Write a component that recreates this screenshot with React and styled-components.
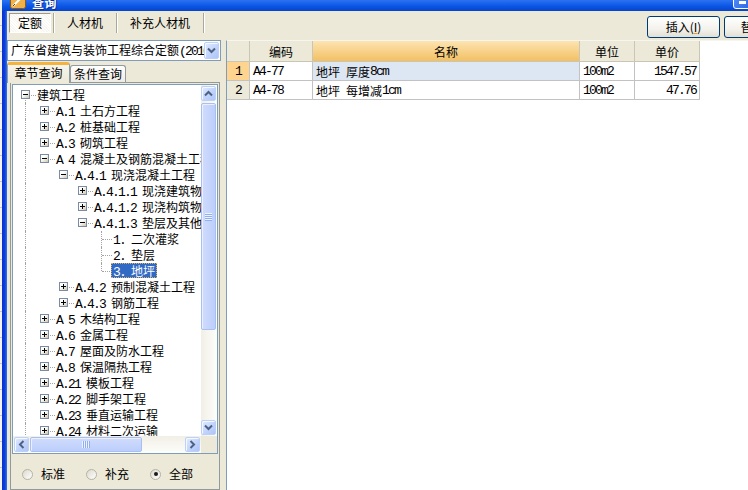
import React from 'react'
import styled, { createGlobalStyle } from 'styled-components'

// Global
const GlobalStyle = createGlobalStyle`
  html, body { margin: 0; padding: 0; background: #fff; }
  body {
    font-family: "Noto Sans CJK SC", "Noto Sans", sans-serif;
    font-size: 12px;
    color: #000;
  }
`

// Data
const treeItems = [
  { lv: 0, text: '建筑工程', open: true },
  { lv: 1, text: 'A.1 土石方工程' },
  { lv: 1, text: 'A.2 桩基础工程' },
  { lv: 1, text: 'A.3 砌筑工程' },
  { lv: 1, text: 'A 4 混凝土及钢筋混凝土工程', open: true },
  { lv: 2, text: 'A.4.1 现浇混凝土工程', open: true },
  { lv: 3, text: 'A.4.1.1 现浇建筑物混凝土' },
  { lv: 3, text: 'A.4.1.2 现浇构筑物混凝土' },
  { lv: 3, text: 'A.4.1.3 垫层及其他混凝土', open: true },
  { lv: 4, text: '1. 二次灌浆', leaf: true },
  { lv: 4, text: '2. 垫层', leaf: true },
  { lv: 4, text: '3. 地坪', leaf: true, selected: true },
  { lv: 2, text: 'A.4.2 预制混凝土工程' },
  { lv: 2, text: 'A.4.3 钢筋工程' },
  { lv: 1, text: 'A 5 木结构工程' },
  { lv: 1, text: 'A.6 金属工程' },
  { lv: 1, text: 'A.7 屋面及防水工程' },
  { lv: 1, text: 'A.8 保温隔热工程' },
  { lv: 1, text: 'A.21 模板工程' },
  { lv: 1, text: 'A.22 脚手架工程' },
  { lv: 1, text: 'A.23 垂直运输工程' },
  { lv: 1, text: 'A.24 材料二次运输' },
  { lv: 1, text: 'A.25 成品保护工程' },
  { lv: 0, text: '装饰装修工程' },
]

const rows = [
  { no: '1', code: 'A4-77', name: '地坪 厚度8cm', unit: '100m2', price: '1547.57', current: true },
  { no: '2', code: 'A4-78', name: '地坪 每增减1cm', unit: '100m2', price: '47.76' },
]

// Styled
const Latin = styled.span`
  font-family: "Liberation Mono", monospace;
  font-size: 13px;
  letter-spacing: -1.8px;
  white-space: pre;
`

const Screen = styled.div`
  width: 748px;
  height: 490px;
  overflow: hidden;
  display: flex;
`
const Backdrop = styled.div`
  width: 2px;
  flex: none;
  background: repeating-linear-gradient(to bottom, #f3f3f3 0 25px, #c8c8c8 25px 26px);
`
const Window = styled.div`
  width: 802px;
  flex: none;
  display: flex;
  flex-direction: column;
`
const TitleBar = styled.div`
  height: 11px;
  flex: none;
  overflow: hidden;
  display: flex;
  align-items: flex-end;
  padding: 0 4px 2px 8px;
  box-sizing: border-box;
  background: linear-gradient(#2b72f2, #0b56e6 55%, #0645c9);
`
const TitleText = styled.span`
  margin-left: 6px;
  color: #fff;
  font-weight: bold;
  font-size: 12px;
  line-height: 13px;
  letter-spacing: 0.5px;
  text-shadow: 1px 1px #0b2f9a;
`
const CaptionButtons = styled.div`
  margin-left: auto;
  display: flex;
  gap: 2px;
`
const CaptionButton = styled.div`
  width: 21px;
  height: 21px;
  box-sizing: border-box;
  border: 1px solid #fff;
  border-radius: 3px;
  background: ${p => (p.$close ? 'linear-gradient(135deg, #e88a6f, #c9431d)' : 'linear-gradient(135deg, #5c97f7, #2a64e2)')};
  position: relative;
  &::after {
    content: '';
    display: ${p => (p.$min ? 'block' : 'none')};
    position: absolute;
    left: 5px;
    bottom: 4px;
    width: 7px;
    height: 3px;
    background: #fff;
  }
`
const Frame = styled.div`
  flex: 1;
  display: flex;
  min-height: 0;
`
const FrameEdge = styled.div`
  width: ${p => p.$w}px;
  flex: none;
  background: linear-gradient(to right, #0a30cf, #0b3fdc 55%, #3672ee);
`
const Body = styled.div`
  flex: 1;
  display: flex;
  flex-direction: column;
  background: #ece9d8;
  min-width: 0;
`
const Toolbar = styled.div`
  height: 29px;
  flex: none;
  box-sizing: border-box;
  padding: 2px 4px 0 2px;
  display: flex;
  align-items: flex-start;
`
const ModeTabs = styled.div`
  display: flex;
  align-items: center;
  height: 20px;
`
const ModeTab = styled.div`
  height: 20px;
  box-sizing: border-box;
  padding: 0 ${p => (p.$active ? 8 : 10)}px;
  display: flex;
  align-items: center;
  line-height: 16px;
  border: 1px solid transparent;
  ${p => p.$active && `
    border-color: #9d9a8c #fff #fff #9d9a8c;
    background: repeating-linear-gradient(45deg, #f7f6f1 0 1px, #fff 1px 2px);
  `}
`
const ModeSep = styled.span`
  width: 1px;
  height: 20px;
  margin: 0 2px 0 2px;
  background: #aca899;
  box-shadow: 1px 0 #fff;
`
const ActionButtons = styled.div`
  margin-left: auto;
  margin-top: 3px;
  display: flex;
  gap: 4px;
`
const ActionButton = styled.div`
  width: 73px;
  height: 22px;
  box-sizing: border-box;
  border: 1px solid #003c74;
  border-radius: 3px;
  background: linear-gradient(#ffffff, #f3f2ec 60%, #e2dfd3);
  display: flex;
  align-items: center;
  justify-content: center;
  line-height: 16px;
  u { text-decoration-color: #e89a2a; }
`
const Main = styled.div`
  flex: 1;
  display: flex;
  min-height: 0;
`
const LeftPanel = styled.div`
  width: 214px;
  flex: none;
  display: flex;
  flex-direction: column;
`
const Combo = styled.div`
  height: 21px;
  flex: none;
  box-sizing: border-box;
  border: 1px solid #7f9db9;
  background: #fff;
  display: flex;
  align-items: center;
  padding: 1px;
`
const ComboText = styled.div`
  flex: 1;
  padding-left: 2px;
  overflow: hidden;
  white-space: nowrap;
  line-height: 17px;
`
const ScrollButton = styled.div`
  width: ${p => p.$w || 15}px;
  height: ${p => p.$h || 15}px;
  flex: none;
  box-sizing: border-box;
  border: 1px solid #bdd0f8;
  border-radius: 2px;
  background: linear-gradient(135deg, #e2ebfe, #c0d2fb 60%, #aec5f8);
  box-shadow: inset 1px 1px #f4f8ff;
  display: flex;
  align-items: center;
  justify-content: center;
  ${p => p.$end && (p.$across ? 'margin-left: auto;' : 'margin-top: auto;')}
`
const TabStrip = styled.div`
  height: 21px;
  flex: none;
  display: flex;
  align-items: flex-end;
  position: relative;
  z-index: 1;
`
const PageTab = styled.div`
  box-sizing: border-box;
  border: 1px solid #919b9c;
  border-bottom: none;
  border-radius: 3px 3px 0 0;
  display: flex;
  align-items: center;
  justify-content: center;
  line-height: 16px;
  ${p => (p.$active ? `
    width: 63px;
    height: 21px;
    margin-bottom: -1px;
    border-top: 3px solid #f5b23c;
    background: linear-gradient(#f6f4ec, #ece9d8);
    padding-bottom: 2px;
  ` : `
    width: 56px;
    height: 17px;
    background: linear-gradient(#ffffff, #ecebe5);
  `)}
`
const TabPage = styled.div`
  flex: 1;
  margin: 0 1px 0 3px;
  border: 1px solid #919b9c;
  background: #ece9d8;
  display: flex;
  flex-direction: column;
  min-height: 0;
`
const TreeBox = styled.div`
  margin: 1px;
  border: 1px solid #7f9db9;
  background: #fff;
  display: grid;
  grid-template-columns: 1fr 16px;
  grid-template-rows: 351px 17px;
`
const TreeView = styled.div`
  overflow: hidden;
  padding-top: 2px;
`
const Row = styled.div`
  display: flex;
  height: 16px;
  padding-left: 3px;
  white-space: nowrap;
`
const LineCell = styled.span`
  position: relative;
  flex: none;
  width: 19px;
  height: 16px;
  &::before {
    content: '';
    position: absolute;
    left: 9px;
    top: ${p => (p.$up ? 0 : 8)}px;
    bottom: ${p => (p.$down ? 0 : 8)}px;
    border-left: 1px dotted #a4a4a4;
    display: ${p => (p.$up || p.$down ? 'block' : 'none')};
  }
  &::after {
    content: '';
    position: absolute;
    left: 10px;
    right: -1px;
    top: 8px;
    border-top: 1px dotted #a4a4a4;
    display: ${p => (p.$across ? 'block' : 'none')};
  }
`
const Expander = styled.span`
  position: absolute;
  left: 5px;
  top: 3px;
  width: 9px;
  height: 9px;
  box-sizing: border-box;
  border: 1px solid #7b8ba3;
  z-index: 1;
  background:
    linear-gradient(#000, #000) center / 5px 1px no-repeat,
    ${p => (p.$open ? '' : 'linear-gradient(#000, #000) center / 1px 5px no-repeat,')}
    linear-gradient(135deg, #fff 35%, #cdc7b2);
`
const Label = styled.span`
  height: 15px;
  line-height: 15px;
  padding: 0 2px;
  ${p => p.$selected && `
    background: #316ac5;
    color: #fff;
    outline: 1px dotted #e2b45a;
    outline-offset: -1px;
  `}
`
const VScroll = styled.div`
  display: flex;
  flex-direction: column;
  padding: 1px 0;
  box-sizing: border-box;
  background: linear-gradient(to right, #f1efe6, #fdfdfa);
`
const HScroll = styled.div`
  display: flex;
  padding: 1px 1px;
  background: linear-gradient(#f1efe6, #fdfdfa);
`
const Thumb = styled.div`
  flex: none;
  box-sizing: border-box;
  ${p => (p.$vertical ? `
    width: 15px;
    height: 227px;
    margin-top: 2px;
    background: linear-gradient(to right, #d0dcfd, #bccefb);
  ` : `
    width: 112px;
    height: 15px;
    margin-left: 1px;
    background: linear-gradient(#d0dcfd, #bccefb);
  `)}
  border: 1px solid #a9bff2;
  border-radius: 2px;
  box-shadow: inset 1px 1px #eaf0fe;
  display: flex;
  align-items: center;
  justify-content: center;
`
const Grip = styled.span`
  ${p => (p.$vertical ? `
    width: 7px;
    height: 8px;
    background: repeating-linear-gradient(to bottom, #eef3fe 0 1px, #8eaff3 1px 2px);
  ` : `
    width: 8px;
    height: 7px;
    background: repeating-linear-gradient(to right, #eef3fe 0 1px, #8eaff3 1px 2px);
  `)}
`
const Corner = styled.div`
  background: #ece9d8;
`
const RadioRow = styled.div`
  display: flex;
  gap: 21px;
  padding: 12px 0 0 11px;
`
const RadioItem = styled.label`
  display: flex;
  align-items: center;
  gap: 8px;
  height: 14px;
  line-height: 14px;
`
const RadioDot = styled.span`
  width: 11px;
  height: 11px;
  box-sizing: border-box;
  border-radius: 50%;
  border: 1px solid #b4b2a6;
  background: linear-gradient(135deg, #dcd9cc, #fff);
  display: flex;
  align-items: center;
  justify-content: center;
  &::after {
    content: '';
    display: ${p => (p.$checked ? 'block' : 'none')};
    width: 4px;
    height: 4px;
    border-radius: 50%;
    background: #1a1a1a;
  }
`
const Splitter = styled.div`
  width: 5px;
  flex: none;
`
const RightPanel = styled.div`
  flex: 1;
  background: #fff;
  border-left: 1px solid #7f9db9;
  border-top: 1px solid #f6f5ef;
`
const Grid = styled.div`
  display: grid;
  grid-template-columns: 23px 63px 267px 55px 65px;
  width: 473px;
`
const HeadCell = styled.div`
  height: 21px;
  box-sizing: border-box;
  border-right: 1px solid #cac6b6;
  border-bottom: 1px solid #cac6b6;
  background: ${p => (p.$active ? 'linear-gradient(#fde4b0, #f2c064)' : '#ece9d8')};
  display: flex;
  align-items: center;
  justify-content: center;
  padding-top: 1px;
`
const tones = {
  plain: '#fff',
  num: '#ece9d8',
  numActive: '#ffd48f',
  current: '#dde6f3',
}
const aligns = { left: 'flex-start', center: 'center', right: 'flex-end' }
const Cell = styled.div`
  height: 19px;
  box-sizing: border-box;
  border-right: 1px solid #c2c2c2;
  border-bottom: 1px solid #c2c2c2;
  padding: 0 3px;
  display: flex;
  align-items: center;
  justify-content: ${p => aligns[p.$align || 'left']};
  background: ${p => tones[p.$tone || 'plain']};
  white-space: nowrap;
  overflow: hidden;
  line-height: 17px;
`

// Helpers
const mixed = text =>
  text
    .split(/([ -~]+)/)
    .filter(Boolean)
    .map((part, i) => (/^[ -~]+$/.test(part) ? <Latin key={i}>{part}</Latin> : part))

const hasNextSibling = (items, i) => {
  for (let j = i + 1; j < items.length; j++) {
    if (items[j].lv < items[i].lv) return false
    if (items[j].lv === items[i].lv) return true
  }
  return false
}

// the tree only draws vertical rules for the root column and for leaf groups
const showsRule = item => item.lv === 0 || item.leaf

const guidesFor = (items, i) => {
  const guides = []
  for (let k = 0; k < items[i].lv; k++) {
    let a = i - 1
    while (a >= 0 && items[a].lv !== k) a--
    guides.push(a >= 0 && showsRule(items[a]) && hasNextSibling(items, a))
  }
  return guides
}

const Chevron = ({ dir }) => {
  const rot = { up: 0, right: 90, down: 180, left: 270 }[dir]
  return (
    <svg width="9" height="9" viewBox="0 0 9 9" style={{ transform: `rotate(${rot}deg)` }}>
      <path d="M1 6.5 L4.5 3 L8 6.5" fill="none" stroke="#4d6185" strokeWidth="2" />
    </svg>
  )
}

const TitleIcon = () => (
  <svg width="16" height="16" viewBox="0 0 16 16">
    <rect x="0.5" y="0.5" width="15" height="15" rx="2" fill="#f0b04a" stroke="#8b5a16" />
    <path d="M3 13 L13 3" stroke="#fff" strokeWidth="2" />
    <path d="M3 13 L5 11" stroke="#5a3a10" strokeWidth="1" />
  </svg>
)

const TreeRow = ({ item, guides, hasNext, first }) => {
  const rule = showsRule(item)
  return (
    <Row>
      {guides.map((g, k) => (
        <LineCell key={k} $up={g} $down={g} />
      ))}
      <LineCell $up={rule && !first} $down={rule && hasNext} $across>
        {!item.leaf && <Expander $open={item.open} />}
      </LineCell>
      <Label $selected={item.selected}>{mixed(item.text)}</Label>
    </Row>
  )
}

const App = () => (
  <Screen>
    <GlobalStyle />
    <Backdrop />
    <Window>
      <TitleBar>
        <TitleIcon />
        <TitleText>查询</TitleText>
        <CaptionButtons>
          <CaptionButton $min />
          <CaptionButton />
          <CaptionButton $close />
        </CaptionButtons>
      </TitleBar>
      <Frame>
        <FrameEdge $w={5} />
        <Body>
          <Toolbar>
            <ModeTabs>
              <ModeTab $active>定额</ModeTab>
              <ModeSep />
              <ModeTab>人材机</ModeTab>
              <ModeSep />
              <ModeTab>补充人材机</ModeTab>
              <ModeSep />
            </ModeTabs>
            <ActionButtons>
              <ActionButton>插入(<u>I</u>)</ActionButton>
              <ActionButton>替换(<u>R</u>)</ActionButton>
            </ActionButtons>
          </Toolbar>
          <Main>
            <LeftPanel>
              <Combo>
                <ComboText>{mixed('广东省建筑与装饰工程综合定额(2010)')}</ComboText>
                <ScrollButton $w={15} $h={17}>
                  <Chevron dir="down" />
                </ScrollButton>
              </Combo>
              <TabStrip>
                <PageTab $active>章节查询</PageTab>
                <PageTab>条件查询</PageTab>
              </TabStrip>
              <TabPage>
                <TreeBox>
                  <TreeView>
                    {treeItems.map((item, i) => (
                      <TreeRow
                        key={i}
                        item={item}
                        first={i === 0}
                        hasNext={hasNextSibling(treeItems, i)}
                        guides={guidesFor(treeItems, i)}
                      />
                    ))}
                  </TreeView>
                  <VScroll>
                    <ScrollButton><Chevron dir="up" /></ScrollButton>
                    <Thumb $vertical><Grip $vertical /></Thumb>
                    <ScrollButton $end><Chevron dir="down" /></ScrollButton>
                  </VScroll>
                  <HScroll>
                    <ScrollButton><Chevron dir="left" /></ScrollButton>
                    <Thumb><Grip /></Thumb>
                    <ScrollButton $end $across><Chevron dir="right" /></ScrollButton>
                  </HScroll>
                  <Corner />
                </TreeBox>
                <RadioRow>
                  <RadioItem><RadioDot />标准</RadioItem>
                  <RadioItem><RadioDot />补充</RadioItem>
                  <RadioItem><RadioDot $checked />全部</RadioItem>
                </RadioRow>
              </TabPage>
            </LeftPanel>
            <Splitter />
            <RightPanel>
              <Grid>
                <HeadCell />
                <HeadCell>编码</HeadCell>
                <HeadCell $active>名称</HeadCell>
                <HeadCell>单位</HeadCell>
                <HeadCell>单价</HeadCell>
                {rows.map(r => (
                  <React.Fragment key={r.no}>
                    <Cell $tone={r.current ? 'numActive' : 'num'} $align="center">{mixed(r.no)}</Cell>
                    <Cell>{mixed(r.code)}</Cell>
                    <Cell $tone={r.current ? 'current' : 'plain'}>{mixed(r.name)}</Cell>
                    <Cell>{mixed(r.unit)}</Cell>
                    <Cell $align="right">{mixed(r.price)}</Cell>
                  </React.Fragment>
                ))}
              </Grid>
            </RightPanel>
          </Main>
        </Body>
        <FrameEdge $w={3} />
      </Frame>
    </Window>
  </Screen>
)

export default App
